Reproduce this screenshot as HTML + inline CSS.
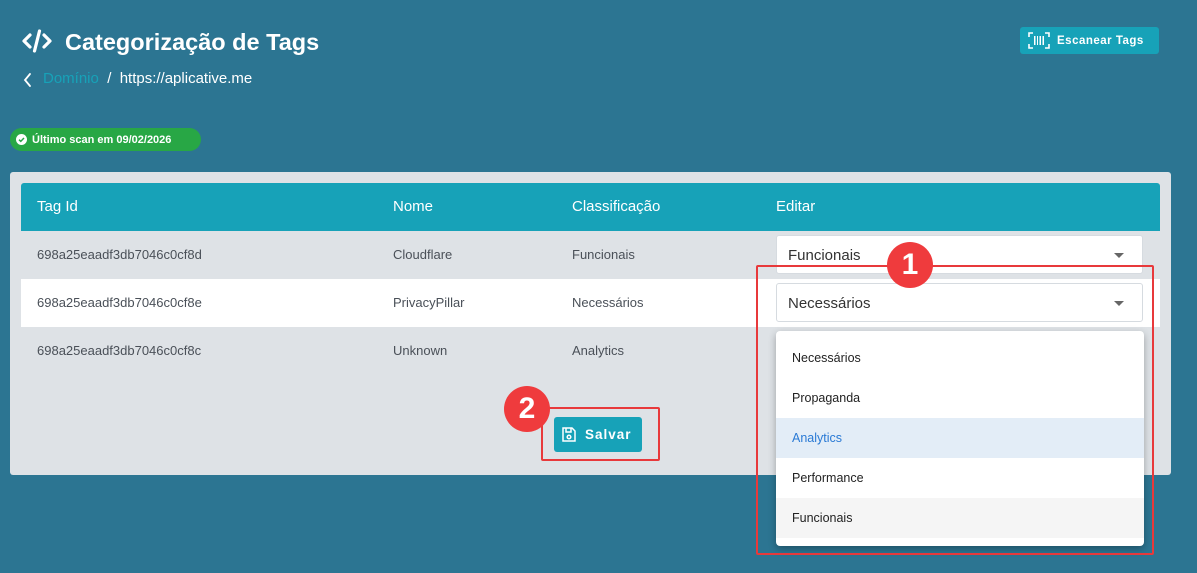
<!DOCTYPE html>
<html><head><meta charset="utf-8"><style>
*{box-sizing:border-box;margin:0;padding:0}
body{width:1197px;height:573px;background:#2c7592;font-family:"Liberation Sans",sans-serif;position:relative;overflow:hidden}
.abs{position:absolute}
.title{left:65px;top:27px;color:#fff;font-size:23.5px;font-weight:bold;line-height:30px}
.bc{left:43px;top:69px;font-size:15px;color:#fff;line-height:20px}
.scan{left:1020px;top:27px;width:139px;height:27px;background:#17a2b8;border-radius:3px;color:#fff;font-size:11.5px;font-weight:bold;letter-spacing:.5px;line-height:29px;padding-left:37px}
.badge{left:10px;top:128px;width:191px;height:23px;background:#28a745;border-radius:12px;color:#fff;font-size:11px;font-weight:bold;line-height:25px;padding-left:22px}
.panel{left:10px;top:172px;width:1161px;height:303px;background:#dee2e6;border-radius:3px}
.thead{left:21px;top:183px;width:1139px;height:48px;background:#17a2b8;border-radius:3px 3px 0 0;color:#fff;font-size:15px;line-height:48px}
.row{left:21px;width:1139px;height:48px;font-size:13px;color:#4a5058;line-height:48px}
.c{position:absolute}
.sel{left:776px;width:367px;height:39px;background:#fff;border:1px solid #d6dbe0;border-radius:3px;font-size:15px;color:#333;line-height:39px;padding-left:11px}
.sel:after{content:"";position:absolute;right:18px;top:17px;border:5px solid transparent;border-top:5px solid #666}
.dd{left:776px;top:331px;width:368px;height:215px;background:#fff;border-radius:4px;box-shadow:0 3px 8px rgba(0,0,0,.3)}
.it{position:absolute;left:0;width:368px;height:40px;line-height:40px;padding-left:16px;font-size:12.5px;color:#222}
.red{border:2px solid #e8393b;border-radius:2px}
.num{width:46px;height:46px;border-radius:50%;background:#ef3b3d;color:#fff;font-weight:bold;font-size:30px;text-align:center;line-height:46px}
.btn{left:554px;top:417px;width:88px;height:35px;background:#17a2b8;border-radius:3px;color:#fff;font-weight:bold;font-size:13.5px;letter-spacing:1px;line-height:36px;padding-left:31px}
</style></head><body>
<svg class="abs" style="left:22px;top:29px" width="30" height="24" viewBox="0 0 30 24"><g fill="none" stroke="#fff" stroke-width="3.2" stroke-linecap="round" stroke-linejoin="round"><path d="M8 6 L2 12 L8 18"/><path d="M22 6 L28 12 L22 18"/><path d="M17.5 2 L12.5 22"/></g></svg>
<div class="abs title">Categorização de Tags</div>
<svg class="abs" style="left:22px;top:72px" width="10" height="16" viewBox="0 0 10 16"><path d="M8 2 L3 8 L8 14" fill="none" stroke="#fff" stroke-width="1.8" stroke-linecap="round"/></svg>
<div class="abs bc"><span style="color:#17a2b8">Domínio</span>&nbsp; / &nbsp;https://aplicative.me</div>
<div class="abs scan">Escanear Tags</div>
<svg class="abs" style="left:1028px;top:32px" width="22" height="17" viewBox="0 0 22 17"><g fill="none" stroke="#fff" stroke-width="1.6"><path d="M1 5V1H5M17 1H21V5M21 12V16H17M5 16H1V12"/></g><g fill="#fff"><rect x="6" y="4" width="1.5" height="9"/><rect x="9" y="4" width="1" height="9"/><rect x="11.5" y="4" width="1.5" height="9"/><rect x="14.5" y="4" width="1.5" height="9"/></g></svg>
<div class="abs badge">Último scan em 09/02/2026</div>
<svg class="abs" style="left:16px;top:134px" width="11" height="11" viewBox="0 0 12 12"><circle cx="6" cy="6" r="6" fill="#fff"/><path d="M3.3 6.2 L5.2 8 L8.7 4.3" fill="none" stroke="#28a745" stroke-width="1.6"/></svg>
<div class="abs panel"></div>
<div class="abs thead"><span class="c" style="left:16px">Tag Id</span><span class="c" style="left:372px">Nome</span><span class="c" style="left:551px">Classificação</span><span class="c" style="left:755px">Editar</span></div>
<div class="abs row" style="top:231px"><span class="c" style="left:16px">698a25eaadf3db7046c0cf8d</span><span class="c" style="left:372px">Cloudflare</span><span class="c" style="left:551px">Funcionais</span></div>
<div class="abs row" style="top:279px;background:#fff"><span class="c" style="left:16px">698a25eaadf3db7046c0cf8e</span><span class="c" style="left:372px">PrivacyPillar</span><span class="c" style="left:551px">Necessários</span></div>
<div class="abs row" style="top:327px"><span class="c" style="left:16px">698a25eaadf3db7046c0cf8c</span><span class="c" style="left:372px">Unknown</span><span class="c" style="left:551px">Analytics</span></div>
<div class="abs sel" style="top:235px">Funcionais</div>
<div class="abs sel" style="top:283px">Necessários</div>
<div class="abs dd">
<div class="it" style="top:7px">Necessários</div>
<div class="it" style="top:47px">Propaganda</div>
<div class="it" style="top:87px;background:#e3edf7;color:#2a7ad5">Analytics</div>
<div class="it" style="top:127px">Performance</div>
<div class="it" style="top:167px;background:#f5f5f5">Funcionais</div>
</div>
<div class="abs red" style="left:756px;top:265px;width:398px;height:290px"></div>
<div class="abs num" style="left:887px;top:242px">1</div>
<div class="abs btn">Salvar</div>
<svg class="abs" style="left:562px;top:427px" width="14" height="15" viewBox="0 0 14 15"><g fill="none" stroke="#fff" stroke-width="1.5"><path d="M1 1H10L13 4V14H1Z"/><path d="M4 1V5H9V1"/><circle cx="7" cy="10" r="1.8"/></g></svg>
<div class="abs red" style="left:541px;top:407px;width:119px;height:54px"></div>
<div class="abs num" style="left:504px;top:386px">2</div>
</body></html>
